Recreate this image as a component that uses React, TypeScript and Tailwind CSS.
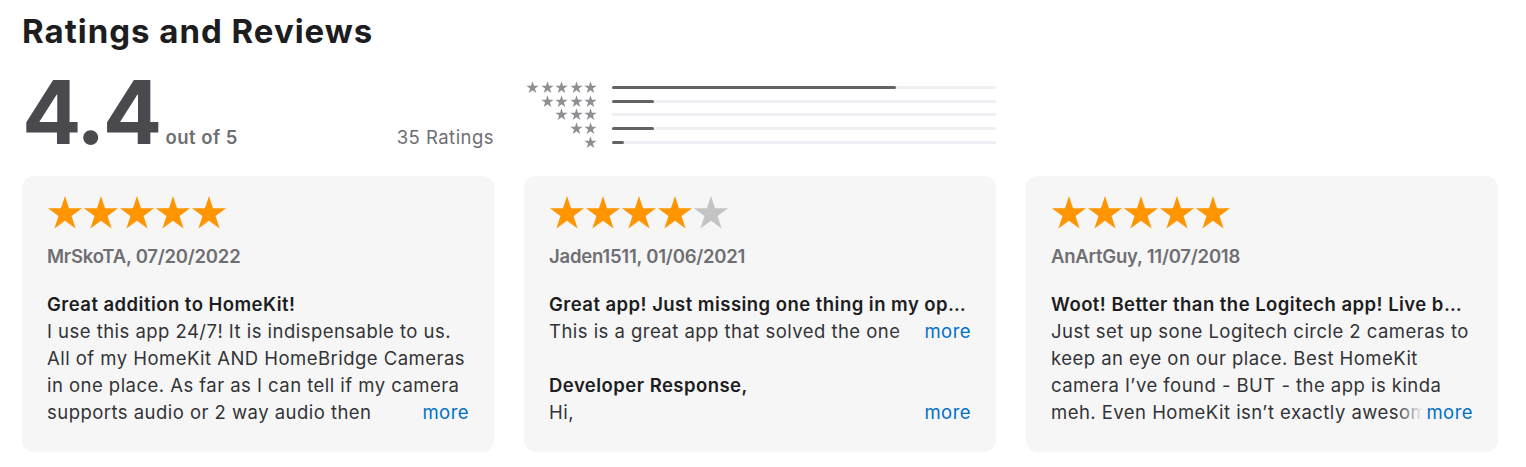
import React from "react";

interface Review {
  rating: number;
  author: string;
  date: string;
  title: string;
  body: string;
  short: boolean;
  response?: string;
}

const reviews: Review[] = [
  {
    rating: 5,
    author: "MrSkoTA",
    date: "07/20/2022",
    title: "Great addition to HomeKit!",
    body: "I use this app 24/7! It is indispensable to us. All of my HomeKit AND HomeBridge Cameras in one place. As far as I can tell if my camera supports audio or 2 way audio then HomeBridge passes it through without any issues at all.",
    short: false,
  },
  {
    rating: 4,
    author: "Jaden1511",
    date: "01/06/2021",
    title: "Great app! Just missing one thing in my opinion",
    body: "This is a great app that solved the one problematic thing I had with my cameras.",
    short: true,
    response: "Hi,",
  },
  {
    rating: 5,
    author: "AnArtGuy",
    date: "11/07/2018",
    title: "Woot! Better than the Logitech app! Live but slow",
    body: "Just set up sone Logitech circle 2 cameras to keep an eye on our place. Best HomeKit camera I\u2019ve found - BUT - the app is kinda meh. Even HomeKit isn\u2019t exactly awesome when it comes to video.",
    short: false,
  },
];

// share of the 35 ratings, 5 stars down to 1
const histogram = [74, 11, 0, 11, 3];

const STAR =
  "12,0.6 14.69,8.89 23.41,8.89 16.36,14.02 19.05,22.31 12,17.18 4.95,22.31 7.64,14.02 0.59,8.89 9.31,8.89";

function Star({ className }: { className: string }) {
  return (
    <svg viewBox="0 0 24 24" className={className}>
      <polygon points={STAR} fill="currentColor" />
    </svg>
  );
}

function More() {
  return (
    <span className="absolute right-0 bottom-0 flex">
      <span className="w-[26px] bg-linear-to-r from-[#f6f6f6]/0 to-[#f6f6f6]" />
      <span className="bg-[#f6f6f6] pl-[3px] text-[#0070c9]">more</span>
    </span>
  );
}

function ReviewCard({ review }: { review: Review }) {
  return (
    <div className="rounded-[12px] bg-[#f6f6f6] px-[25px] pt-[19px] pb-[26px]">
      <div className="flex">
        {[0, 1, 2, 3, 4].map((i) => (
          <Star
            key={i}
            className={`h-[36px] w-[36px] ${i < review.rating ? "text-[#ff9500]" : "text-[#c4c4c4]"}`}
          />
        ))}
      </div>
      <p className="mt-[12px] font-semibold tracking-[-0.012em] text-[#6e6e73]">
        {review.author}, {review.date}
      </p>
      <h3 className="mt-[21px] truncate font-semibold text-[#1d1d1f]">
        {review.title}
      </h3>
      <div className="relative">
        <p
          className={`${review.short ? "h-[27px]" : "h-[108px]"} overflow-hidden text-[#333336]`}
        >
          {review.body}
        </p>
        <More />
      </div>
      {review.response && (
        <>
          <h3 className="mt-[27px] font-semibold text-[#1d1d1f]">
            Developer Response,
          </h3>
          <div className="relative">
            <p className="h-[27px] overflow-hidden text-[#333336]">
              {review.response}
            </p>
            <More />
          </div>
        </>
      )}
    </div>
  );
}

export default function App() {
  return (
    <div className="min-h-screen bg-white pt-[11px] pr-[28px] pl-[22px] font-['Inter','Noto_Sans',sans-serif] text-[18.5px] leading-[27px] tracking-[0.025em]">
      <h2 className="text-[33px] leading-[40px] font-bold tracking-[0.03em] text-[#1d1d1f]">
        Ratings and Reviews
      </h2>

      <div className="mt-[17px] grid grid-cols-3 gap-x-[30px]">
        <div className="flex items-baseline">
          <span className="text-[88px] leading-[88px] font-bold tracking-[-0.03em] text-[#4a4a4e]">
            4.4
          </span>
          <span className="ml-[6px] font-semibold text-[#6e6e73]">out of 5</span>
          <span className="ml-auto text-[#6e6e73]">35 Ratings</span>
        </div>

        <div className="pt-[13px]">
          {histogram.map((pct, row) => (
            <div key={row} className="flex h-[13.6px] items-center">
              <div className="flex w-[73px] justify-end gap-[1.5px] text-[#8e8e93]">
                {Array.from({ length: 5 - row }).map((_, i) => (
                  <Star key={i} className="h-[13px] w-[13px]" />
                ))}
              </div>
              <div className="ml-[15px] h-[3px] flex-1 rounded-full bg-[#efeff4]">
                <div
                  className="h-full rounded-full bg-[#636366]"
                  style={{ width: `${pct}%` }}
                />
              </div>
            </div>
          ))}
        </div>
      </div>

      <div className="mt-[20px] grid grid-cols-3 gap-[30px]">
        {reviews.map((r) => (
          <ReviewCard key={r.author} review={r} />
        ))}
      </div>
    </div>
  );
}
